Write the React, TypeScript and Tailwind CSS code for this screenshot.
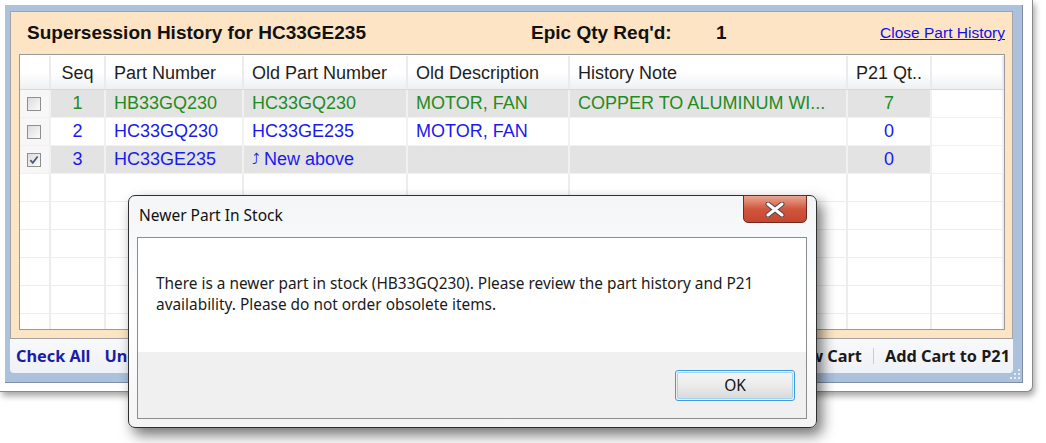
import React from "react";

type Row = {
  checked: boolean;
  seq: string;
  part: string;
  oldPart: string;
  oldDesc: string;
  note: string;
  qty: string;
  color: string;
  gray: boolean;
  arrow?: boolean;
};

const rows: Row[] = [
  { checked: false, seq: "1", part: "HB33GQ230", oldPart: "HC33GQ230", oldDesc: "MOTOR, FAN", note: "COPPER TO ALUMINUM WI...", qty: "7", color: "text-[#1f8c1f]", gray: true },
  { checked: false, seq: "2", part: "HC33GQ230", oldPart: "HC33GE235", oldDesc: "MOTOR, FAN", note: "", qty: "0", color: "text-[#1a1aee]", gray: false },
  { checked: true, seq: "3", part: "HC33GE235", oldPart: "New above", oldDesc: "", note: "", qty: "0", color: "text-[#1a1aee]", gray: true, arrow: true },
];

const gridCols = "grid grid-cols-[31px_55px_138px_164px_162px_278px_84px_72px]";

function CheckBox({ checked }: { checked: boolean }) {
  return (
    <div className="w-[14px] h-[14px] border border-[#8e8f8f] bg-gradient-to-br from-[#dcdcdc] to-[#fbfbfb] flex items-center justify-center">
      {checked && (
        <svg width="10" height="10" viewBox="0 0 9 9">
          <path d="M1.2 4.6 L3.4 7 L7.8 1.3" fill="none" stroke="#4a5a78" strokeWidth="1.6" />
        </svg>
      )}
    </div>
  );
}

function HeaderCell({ children, center }: { children?: React.ReactNode; center?: boolean }) {
  return (
    <div
      className={`h-[33px] mt-[1px] pt-[2px] flex items-center border-r-2 border-[#e9ebee] bg-gradient-to-b from-white from-50% to-[#eef0f3] text-[18px] text-[#1e1e1e] ${center ? "justify-center" : "pl-[8px]"}`}
    >
      {children}
    </div>
  );
}

function Cell({ children, center, bg, color }: { children?: React.ReactNode; center?: boolean; bg: string; color: string }) {
  return (
    <div
      className={`h-[28px] flex items-center border-r-2 border-b border-[#f1f1f1] ${bg} ${color} text-[18px] whitespace-nowrap overflow-hidden ${center ? "justify-center" : "pl-[8px]"}`}
    >
      {children}
    </div>
  );
}

function EmptyRow({ last }: { last?: boolean }) {
  return (
    <>
      {[0, 1, 2, 3, 4, 5, 6, 7].map((i) => (
        <div
          key={i}
          className={`${last ? "h-[16px]" : "h-[28px] border-b"} border-r-2 border-[#ededed] bg-white`}
        />
      ))}
    </>
  );
}

export default function App() {
  return (
    <div className="relative w-[1046px] h-[443px] bg-white overflow-hidden font-['Liberation_Sans',Arial,sans-serif]">
      {/* main window */}
      <div className="w-[1033px] h-[392px] bg-white border-r border-b border-[#8a8a8a] rounded-br-[6px] shadow-[2px_4px_6px_rgba(0,0,0,0.35)] pl-[5px] pt-[5px] pr-[9px] pb-[8px]">
        <div className="h-full bg-[#abc1dc] border-r border-b border-[#7d8ea6] pl-[5px] pt-[6px] pr-[9px] pb-[9px] flex flex-col">
          {/* peach panel */}
          <div className="h-[328px] bg-[#fde4c4] border border-[#a3a3a3] flex flex-col">
            <div className="h-[42px] flex items-center pl-[16px] pr-[7px] text-[#111]">
              <span className="w-[504px] font-bold text-[19px]">Supersession History for HC33GE235</span>
              <span className="w-[185px] font-bold text-[19px]">Epic Qty Req'd:</span>
              <span className="font-bold text-[19px]">1</span>
              <span className="ml-auto text-[15.5px] text-[#1010e8] underline">Close Part History</span>
            </div>
            <div className="ml-[8px] w-[986px] h-[276px] border border-[#9a9a9a] bg-white overflow-hidden">
              <div className={`${gridCols} border-b border-[#d8d8d8]`}>
                <HeaderCell />
                <HeaderCell center>Seq</HeaderCell>
                <HeaderCell>Part Number</HeaderCell>
                <HeaderCell>Old Part Number</HeaderCell>
                <HeaderCell>Old Description</HeaderCell>
                <HeaderCell>History Note</HeaderCell>
                <HeaderCell center>P21 Qt..</HeaderCell>
                <HeaderCell />
              </div>
              <div className={gridCols}>
                {rows.map((r, idx) => {
                  const bg = r.gray ? "bg-[#e3e3e3]" : "bg-white";
                  return (
                    <React.Fragment key={idx}>
                      <div className="h-[28px] flex items-center pl-[7px] border-r-2 border-b border-[#f1f1f1] bg-[#f7f7f7]">
                        <CheckBox checked={r.checked} />
                      </div>
                      <Cell center bg={bg} color={r.color}>{r.seq}</Cell>
                      <Cell bg={bg} color={r.color}>{r.part}</Cell>
                      <Cell bg={bg} color={r.color}>
                        {r.arrow && <span className="text-[15px] mr-[4px] font-['DejaVu_Sans',sans-serif]">⤴</span>}
                        {r.oldPart}
                      </Cell>
                      <Cell bg={bg} color={r.color}>{r.oldDesc}</Cell>
                      <Cell bg={bg} color={r.color}>{r.note}</Cell>
                      <Cell center bg={bg} color={r.color}>{r.qty}</Cell>
                      <div className="h-[28px] border-r-2 border-b border-[#f1f1f1] bg-white" />
                    </React.Fragment>
                  );
                })}
                <EmptyRow />
                <EmptyRow />
                <EmptyRow />
                <EmptyRow />
                <EmptyRow />
                <EmptyRow last />
              </div>
            </div>
          </div>
          {/* toolbar */}
          <div className="relative h-[34px] bg-gradient-to-b from-[#f8f9fb] to-[#eef1f6] rounded-b-[4px] flex items-center pl-[6px] pr-[3px] font-['Noto_Sans',sans-serif] font-bold text-[16.3px]">
            <span className="text-[#1c1ca8]">Check All</span>
            <span className="ml-[14px] text-[#1c1ca8]">Uncheck All</span>
            <span className="ml-auto text-[#1a1a1a]">View Cart</span>
            <span className="mx-[11px] w-px h-[16px] bg-[#c9ccd2]" />
            <span className="text-[#1a1a1a]">Add Cart to P21</span>
            <svg className="absolute right-[-8px] bottom-[-7px]" width="12" height="12" viewBox="0 0 12 12">
              {[
                [9, 1],
                [9, 5],
                [5, 5],
                [9, 9],
                [5, 9],
                [1, 9],
              ].map(([x, y], i) => (
                <rect key={i} x={x} y={y} width="2" height="2" fill="#e8eef6" />
              ))}
            </svg>
          </div>
        </div>
      </div>

      {/* dialog */}
      <div className="absolute left-[128px] top-[195px] w-[689px] h-[233px] rounded-[7px] border border-[#2f2f2f] bg-gradient-to-b from-[#f3f5f7] via-white to-[#f4f4f4] shadow-[5px_7px_14px_rgba(0,0,0,0.55)] font-['Noto_Sans',sans-serif]">
        <div className="absolute left-[10px] top-[8px] text-[15.5px] text-[#111]">Newer Part In Stock</div>
        <div className="absolute right-[9px] top-[-1px] w-[64px] h-[28px] rounded-b-[5px] border border-[#6e2a1e] bg-gradient-to-b from-[#e9a593] via-[#d0563d] to-[#c7452e] flex items-center justify-center">
          <svg width="20" height="15" viewBox="0 0 20 15">
            <path d="M3 2 L17 13 M17 2 L3 13" stroke="#4a4a4a" strokeWidth="5" strokeLinecap="round" />
            <path d="M3 2 L17 13 M17 2 L3 13" stroke="#ffffff" strokeWidth="3" strokeLinecap="round" />
          </svg>
        </div>
        <div className="absolute left-[8px] top-[41px] right-[9px] bottom-[8px] border border-[#8b8c8d] flex flex-col">
          <div className="h-[114px] bg-white pl-[18px] pt-[35px] text-[15.4px] leading-[21px] text-[#1a1a1a]">
            There is a newer part in stock (HB33GQ230). Please review the part history and P21
            <br />
            availability. Please do not order obsolete items.
          </div>
          <div className="flex-1 bg-[#f0f0f0] flex justify-end items-start pt-[18px] pr-[11px]">
            <div className="w-[120px] h-[31px] rounded-[3px] border border-[#3d9be0] p-[1px]">
              <div className="w-full h-full rounded-[2px] border border-[#9fd5f3] bg-gradient-to-b from-[#f4f4f4] via-[#ebebeb] to-[#dadada] flex items-center justify-center text-[15.5px] text-[#111]">
                OK
              </div>
            </div>
          </div>
        </div>
      </div>
    </div>
  );
}
